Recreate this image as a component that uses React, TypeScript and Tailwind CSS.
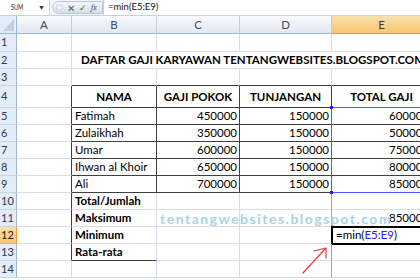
import type { ReactNode } from 'react';

type Edge = 'g' | 'd' | 'b' | 'm' | 'n';

const rightCls: Record<Edge, string> = {
  g: 'border-r border-r-[#d6dde8]',
  d: 'border-r border-r-[#404040]',
  b: 'border-r border-r-[#5058f0]',
  m: 'border-r border-r-[#a3a3a3]',
  n: '',
};

const bottomCls: Record<Edge, string> = {
  g: 'border-b border-b-[#d6dde8]',
  d: 'border-b border-b-[#404040]',
  b: 'border-b border-b-[#5058f0]',
  m: 'border-b border-b-[#a3a3a3]',
  n: '',
};

const colW = ['w-[17px]', 'w-[55px]', 'w-[85px]', 'w-[83px]', 'w-[92px]', 'w-[100px]'];

type CellProps = {
  col: number;
  r?: Edge;
  b?: Edge;
  align?: 'left' | 'right' | 'center';
  bold?: boolean;
  className?: string;
  children?: ReactNode;
};

const Cell = ({ col, r = 'g', b = 'g', align = 'left', bold, className = '', children }: CellProps) => (
  <div
    className={`relative flex h-full shrink-0 items-center whitespace-nowrap ${colW[col]} ${rightCls[r]} ${bottomCls[b]} ${
      align === 'right' ? 'justify-end pr-[2px]' : align === 'center' ? 'justify-center' : 'pl-[3px]'
    } ${bold ? 'font-bold' : ''} ${className}`}
  >
    {children}
  </div>
);

const RowHead = ({ n, active }: { n: number; active?: boolean }) => (
  <div
    className={`flex h-full w-[17px] shrink-0 items-center border-r border-b pl-[1px] text-[11px] ${
      active
        ? 'border-r-[#f29b38] border-b-[#f2b25c] bg-gradient-to-b from-[#fbe0a6] to-[#f7c66c] text-[#222]'
        : 'border-r-[#9eb6ce] border-b-[#c9d6e6] bg-[#e4ecf7] text-[#2b3a4d]'
    }`}
  >
    {n}
  </div>
);

const ColHead = ({ col, label, active }: { col: number; label: string; active?: boolean }) => (
  <div
    className={`flex h-full shrink-0 items-center justify-center border-r border-b text-[11.5px] ${colW[col]} ${
      active
        ? 'border-r-[#f0b45a] border-b-[#f29436] bg-gradient-to-b from-[#fae2ae] to-[#f5c46b] text-[#3a3a3a]'
        : 'border-r-[#c3cfde] border-b-[#9eb6ce] bg-gradient-to-b from-[#f8fafd] to-[#e1e8f2] text-[#3d4b5c]'
    }`}
  >
    {label}
  </div>
);

const Row = ({ h = 'h-[17px]', children }: { h?: string; children: ReactNode }) => (
  <div className={`flex ${h}`}>{children}</div>
);

const employees = [
  ['Fatimah', '450000', '150000', '600000'],
  ['Zulaikhah', '350000', '150000', '500000'],
  ['Umar', '600000', '150000', '750000'],
  ['Ihwan al Khoir', '650000', '150000', '800000'],
  ['Ali', '700000', '150000', '850000'],
];

export default function App() {
  return (
    <div
      className="relative h-[280px] w-[420px] overflow-hidden bg-white text-[11.5px] text-black"
      style={{ fontFamily: 'Lato, "Liberation Sans", sans-serif' }}
    >
      {/* formula bar */}
      <div className="flex h-[16px] items-center border-b border-[#c4d1e2] bg-[#f3f6fb]">
        <div className="flex h-[15px] w-[50px] items-center justify-between border-r border-[#c4d1e2] bg-white pl-[9px] pr-[4px]">
          <span className="scale-x-75 text-[7.5px] tracking-tight text-[#333]">SUM</span>
          <span className="text-[7px] text-[#333]">▼</span>
        </div>
        <div className="ml-[2px] flex h-[13px] w-[51px] items-center gap-[4px] rounded-l-full border border-[#b9c6d8] bg-gradient-to-b from-[#f4f7fb] to-[#d6dfeb] pl-[3px]">
          <span className="h-[7px] w-[7px] rounded-full border border-[#c9d1dc] bg-[#eef2f7]" />
          <span className="text-[10px] leading-none text-[#5a5a5a]">✕</span>
          <span className="text-[9px] leading-none text-[#5a5a5a]">✓</span>
          <span className="font-serif text-[8px] italic leading-none text-[#5a5a5a]">fx</span>
        </div>
        <div className="flex h-[15px] flex-1 items-center border-l border-[#c4d1e2] bg-white pl-[4px] text-[9.5px] text-[#111]">
          =min(E5:E9)
        </div>
      </div>

      {/* column headers */}
      <div className="flex h-[18px]">
        <div className="relative h-full w-[17px] shrink-0 border-r border-b border-r-[#9eb6ce] border-b-[#9eb6ce] bg-[#e4ecf7]">
          <svg className="absolute bottom-[2px] right-[2px]" width="11" height="12" viewBox="0 0 11 12">
            <polygon points="11,0 11,12 0,12" fill="#c3cfdf" />
          </svg>
        </div>
        <ColHead col={1} label="A" />
        <ColHead col={2} label="B" />
        <ColHead col={3} label="C" />
        <ColHead col={4} label="D" />
        <ColHead col={5} label="E" active />
      </div>

      <Row h="h-[18px]">
        <RowHead n={1} />
        <Cell col={1} />
        <Cell col={2} />
        <Cell col={3} />
        <Cell col={4} />
        <Cell col={5} />
      </Row>

      <Row>
        <RowHead n={2} />
        <Cell col={1} />
        <div className="flex h-full w-[362px] shrink-0 items-center justify-center whitespace-nowrap border-b border-b-[#d6dde8] font-bold">
          DAFTAR GAJI KARYAWAN TENTANGWEBSITES.BLOGSPOT.COM
        </div>
      </Row>

      <Row>
        <RowHead n={3} />
        <Cell col={1} />
        <Cell col={2} b="d" />
        <Cell col={3} b="d" />
        <Cell col={4} b="d" />
        <Cell col={5} b="d" />
      </Row>

      <Row h="h-[22px]">
        <RowHead n={4} />
        <Cell col={1} r="d" />
        <Cell col={2} r="d" b="d" align="center" bold>NAMA</Cell>
        <Cell col={3} r="d" b="d" align="center" bold>GAJI POKOK</Cell>
        <Cell col={4} r="d" b="d" align="center" bold>TUNJANGAN</Cell>
        <Cell col={5} b="b" align="center" bold>TOTAL GAJI</Cell>
      </Row>

      {employees.map(([name, pokok, tunj, total], i) => (
        <Row key={name}>
          <RowHead n={5 + i} />
          <Cell col={1} r="d" />
          <Cell col={2} r="d" b="d">{name}</Cell>
          <Cell col={3} r="d" b="d" align="right">{pokok}</Cell>
          <Cell col={4} r="b" b="d" align="right">{tunj}</Cell>
          <Cell col={5} b={i === 4 ? 'b' : 'd'} align="right">
            {total}
          </Cell>
        </Row>
      ))}

      <Row>
        <RowHead n={10} />
        <Cell col={1} r="d" />
        <Cell col={2} bold>Total/Jumlah</Cell>
        <Cell col={3} />
        <Cell col={4} r="m" />
        <Cell col={5} />
      </Row>

      <Row>
        <RowHead n={11} />
        <Cell col={1} r="d" />
        <Cell col={2} bold>Maksimum</Cell>
        <Cell col={3} className="z-10 pl-[1px]">
          <span className="text-[14px] font-bold tracking-[1.5px] text-[#a9d3e4]">tentangwebsites.blogspot.com</span>
        </Cell>
        <Cell col={4} r="m" />
        <Cell col={5} align="right">850000</Cell>
      </Row>

      <Row>
        <RowHead n={12} active />
        <Cell col={1} r="d" />
        <Cell col={2} bold>Minimum</Cell>
        <Cell col={3} />
        <Cell col={4} r="m" />
        <Cell col={5} className="pl-[4px]">
          <div className="absolute -top-px -left-px bottom-[-2px] right-[-4px] border-2 border-black" />
          <span>
            =min(<span className="text-[#2020ff]">E5:E9</span>)
          </span>
        </Cell>
      </Row>

      <Row>
        <RowHead n={13} />
        <Cell col={1} r="d" />
        <Cell col={2} b="d" bold>Rata-rata</Cell>
        <Cell col={3} />
        <Cell col={4} r="m" />
        <Cell col={5} />
      </Row>

      <Row>
        <RowHead n={14} />
        <Cell col={1} />
        <Cell col={2} />
        <Cell col={3} />
        <Cell col={4} r="m" />
        <Cell col={5} />
      </Row>

      {/* range handles and hand-drawn arrow */}
      <svg className="pointer-events-none absolute left-0 top-0" width="420" height="280">
        <rect x="330" y="106" width="3" height="3" fill="#2020ff" />
        <rect x="330" y="191" width="3" height="3" fill="#2020ff" />
        <path d="M303 273 L325 249" stroke="#e53935" strokeWidth="1.2" fill="none" strokeLinecap="round" />
        <path d="M314 251 L326 248 L326 258" stroke="#e53935" strokeWidth="1.2" fill="none" strokeLinecap="round" strokeLinejoin="round" />
      </svg>
    </div>
  );
}
